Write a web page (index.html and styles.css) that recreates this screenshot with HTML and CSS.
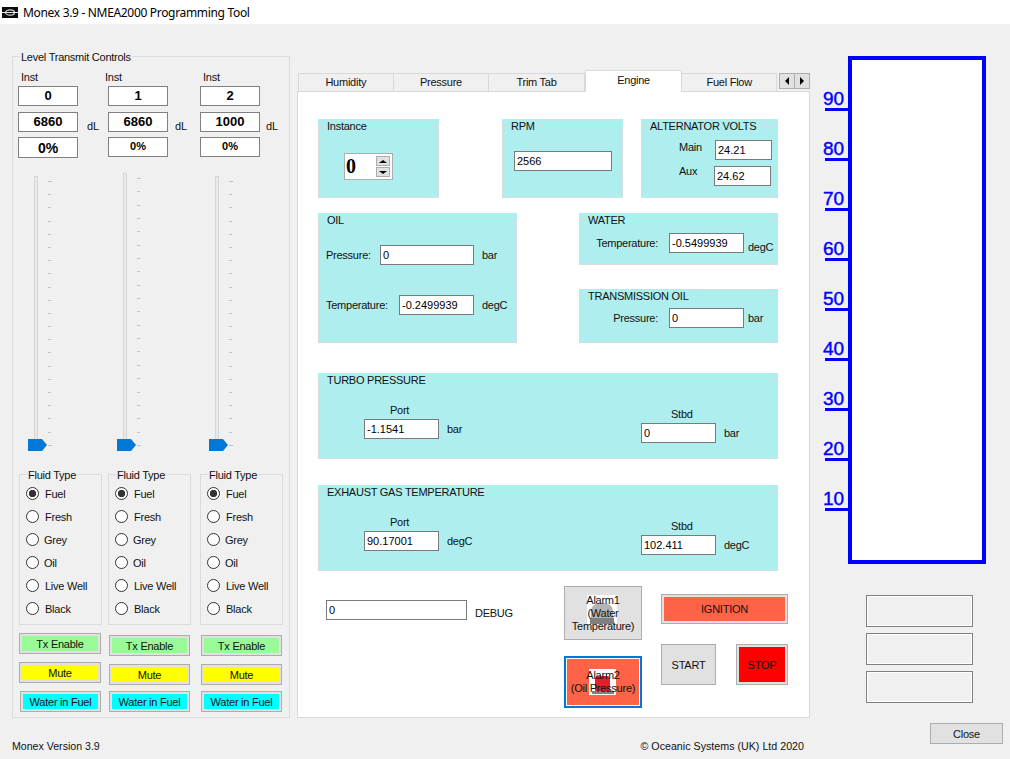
FILE: index.html
```html
<!DOCTYPE html>
<html lang="en">
<head>
<meta charset="utf-8">
<title>Monex 3.9 - NMEA2000 Programming Tool</title>
<link rel="stylesheet" href="styles.css">
</head>
<body>
<header class="titlebar">
  <svg class="logo" width="16" height="11" viewBox="0 0 16 11"><rect width="16" height="11" fill="#0a0a0a"/><ellipse cx="8" cy="5.5" rx="4.5" ry="2.6" fill="none" stroke="#d8d8d8" stroke-width="1.2"/><path d="M0 5.5H16" stroke="#e8e8e8" stroke-width="1"/></svg>
  <span class="titletext">Monex 3.9 - NMEA2000 Programming Tool</span>
</header>
<main class="window">
  <div class="leftcol">
    <section class="group level">
      <div class="frame">
        <div class="legend">Level Transmit Controls</div>
        <div class="channels">
          <div class="channel c1">
            <div class="inst">Inst</div>
            <div class="box b1">0</div>
            <div class="boxrow"><div class="box">6860</div><span class="dl">dL</span></div>
            <div class="box b3 tall">0%</div>
            <div class="slider"><span class="track"></span><span class="ticks"><i></i><i></i><i></i><i></i><i></i><i></i><i></i><i></i><i></i><i></i><i></i><i></i><i></i><i></i><i></i><i></i><i></i><i></i><i></i><i></i><i></i></span><svg class="thumb" width="19" height="12" viewBox="0 0 19 12"><path d="M0 0H14L19 6L14 12H0Z"/></svg></div>
            <section class="group fluid">
              <div class="frame">
                <div class="legend">Fluid Type</div>
                <label class="radio"><input type="radio" name="f1" checked><span>Fuel</span></label>
                <label class="radio"><input type="radio" name="f1"><span>Fresh</span></label>
                <label class="radio"><input type="radio" name="f1"><span class="tight">Grey</span></label>
                <label class="radio"><input type="radio" name="f1"><span class="tight">Oil</span></label>
                <label class="radio"><input type="radio" name="f1"><span>Live Well</span></label>
                <label class="radio"><input type="radio" name="f1"><span>Black</span></label>
              </div>
            </section>
            <button class="btn tx">Tx Enable</button>
            <button class="btn mute">Mute</button>
            <button class="btn wif">Water in Fuel</button>
          </div>
          <div class="channel c2">
            <div class="inst">Inst</div>
            <div class="box b1">1</div>
            <div class="boxrow"><div class="box">6860</div><span class="dl">dL</span></div>
            <div class="box b3 small">0%</div>
            <div class="slider"><span class="track"></span><span class="ticks"><i></i><i></i><i></i><i></i><i></i><i></i><i></i><i></i><i></i><i></i><i></i><i></i><i></i><i></i><i></i><i></i><i></i><i></i><i></i><i></i><i></i></span><svg class="thumb" width="19" height="12" viewBox="0 0 19 12"><path d="M0 0H14L19 6L14 12H0Z"/></svg></div>
            <section class="group fluid">
              <div class="frame">
                <div class="legend">Fluid Type</div>
                <label class="radio"><input type="radio" name="f2" checked><span>Fuel</span></label>
                <label class="radio"><input type="radio" name="f2"><span>Fresh</span></label>
                <label class="radio"><input type="radio" name="f2"><span class="tight">Grey</span></label>
                <label class="radio"><input type="radio" name="f2"><span class="tight">Oil</span></label>
                <label class="radio"><input type="radio" name="f2"><span>Live Well</span></label>
                <label class="radio"><input type="radio" name="f2"><span>Black</span></label>
              </div>
            </section>
            <button class="btn tx">Tx Enable</button>
            <button class="btn mute">Mute</button>
            <button class="btn wif">Water in Fuel</button>
          </div>
          <div class="channel c3">
            <div class="inst">Inst</div>
            <div class="box b1">2</div>
            <div class="boxrow"><div class="box">1000</div><span class="dl">dL</span></div>
            <div class="box b3 small">0%</div>
            <div class="slider"><span class="track"></span><span class="ticks"><i></i><i></i><i></i><i></i><i></i><i></i><i></i><i></i><i></i><i></i><i></i><i></i><i></i><i></i><i></i><i></i><i></i><i></i><i></i><i></i><i></i></span><svg class="thumb" width="19" height="12" viewBox="0 0 19 12"><path d="M0 0H14L19 6L14 12H0Z"/></svg></div>
            <section class="group fluid">
              <div class="frame">
                <div class="legend">Fluid Type</div>
                <label class="radio"><input type="radio" name="f3" checked><span>Fuel</span></label>
                <label class="radio"><input type="radio" name="f3"><span>Fresh</span></label>
                <label class="radio"><input type="radio" name="f3"><span class="tight">Grey</span></label>
                <label class="radio"><input type="radio" name="f3"><span class="tight">Oil</span></label>
                <label class="radio"><input type="radio" name="f3"><span>Live Well</span></label>
                <label class="radio"><input type="radio" name="f3"><span>Black</span></label>
              </div>
            </section>
            <button class="btn tx">Tx Enable</button>
            <button class="btn mute">Mute</button>
            <button class="btn wif">Water in Fuel</button>
          </div>
        </div>
      </div>
    </section>
    <div class="version">Monex Version 3.9</div>
  </div>

  <div class="centercol">
    <nav class="tabs">
      <div class="tab t-hum">Humidity</div>
      <div class="tab t-pre">Pressure</div>
      <div class="tab t-tri">Trim Tab</div>
      <div class="tab t-eng active">Engine</div>
      <div class="tab t-fue">Fuel Flow</div>
      <div class="scroller"><span class="scrollbtn"><i class="arrow-left"></i></span><span class="scrollbtn"><i class="arrow-right"></i></span></div>
    </nav>
    <div class="page">
      <div class="row-a">
        <section class="group panel p-inst">
          <div class="frame">
            <div class="legend">Instance</div>
            <div class="spinner"><span class="spinval">0</span><span class="spinbtns"><span class="spinbtn"><i class="arrow-up"></i></span><span class="spinbtn"><i class="arrow-down"></i></span></span></div>
          </div>
        </section>
        <section class="group panel p-rpm">
          <div class="frame">
            <div class="legend">RPM</div>
            <input class="inp w98 rpm-in" value="2566">
          </div>
        </section>
        <section class="group panel p-alt">
          <div class="frame">
            <div class="legend">ALTERNATOR VOLTS</div>
            <div class="field alt-main"><span class="lbl">Main</span><input class="inp w57" value="24.21"></div>
            <div class="field alt-aux"><span class="lbl">Aux</span><input class="inp w57" value="24.62"></div>
          </div>
        </section>
      </div>
      <div class="row-b">
        <section class="group panel p-oil">
          <div class="frame">
            <div class="legend">OIL</div>
            <div class="field oil-1"><span class="lbl">Pressure:</span><input class="inp w94" value="0"><span class="unit">bar</span></div>
            <div class="field oil-2"><span class="lbl">Temperature:</span><input class="inp w75" value="-0.2499939"><span class="unit">degC</span></div>
          </div>
        </section>
        <div class="stack">
          <section class="group panel p-wat">
            <div class="frame">
              <div class="legend">WATER</div>
              <div class="field sfield"><span class="lbl">Temperature:</span><input class="inp w75" value="-0.5499939"><span class="unit low">degC</span></div>
            </div>
          </section>
          <section class="group panel p-tra">
            <div class="frame">
              <div class="legend">TRANSMISSION OIL</div>
              <div class="field sfield"><span class="lbl">Pressure:</span><input class="inp w75" value="0"><span class="unit">bar</span></div>
            </div>
          </section>
        </div>
      </div>
      <section class="group panel p-wide p-tur">
        <div class="frame">
          <div class="legend">TURBO PRESSURE</div>
          <div class="pair">
            <div class="block port"><div class="cap">Port</div><div class="field"><input class="inp w75" value="-1.1541"><span class="unit">bar</span></div></div>
            <div class="block stbd"><div class="cap">Stbd</div><div class="field"><input class="inp w75" value="0"><span class="unit">bar</span></div></div>
          </div>
        </div>
      </section>
      <section class="group panel p-wide p-exh">
        <div class="frame">
          <div class="legend">EXHAUST GAS TEMPERATURE</div>
          <div class="pair">
            <div class="block port"><div class="cap">Port</div><div class="field"><input class="inp w75" value="90.17001"><span class="unit">degC</span></div></div>
            <div class="block stbd"><div class="cap">Stbd</div><div class="field"><input class="inp w75" value="102.411"><span class="unit">degC</span></div></div>
          </div>
        </div>
      </section>
      <div class="row-e">
        <div class="field debug"><input class="inp w141" value="0"><span class="unit low3">DEBUG</span></div>
        <div class="alarms">
          <button class="alarm a1">
            <svg class="alarm-icon i1" width="30" height="30" viewBox="0 0 30 30"><rect width="30" height="30" fill="#fff"/><path d="M4 23V17C4 11 8 8 15 8S26 11 26 17V23Z" fill="#b4b4b4"/><rect x="3" y="23" width="24" height="6" fill="#808080"/></svg>
            <span class="alarm-text">Alarm1<br>(Water<br>Temperature)</span>
          </button>
          <button class="alarm a2">
            <svg class="alarm-icon i2" width="27" height="26" viewBox="0 0 27 26"><rect width="27" height="26" fill="#fff"/><path d="M6 22V10C6 8 8 7 10 7H18C20 7 21 8 21 10V22Z" fill="#e0202a"/><rect x="3" y="22" width="22" height="3" fill="#808080"/></svg>
            <span class="alarm-text">Alarm2<br>(Oil Pressure)</span>
          </button>
        </div>
        <div class="engine-ctl">
          <button class="btn ign">IGNITION</button>
          <div class="startstop">
            <button class="plain start">START</button>
            <button class="btn stop">STOP</button>
          </div>
        </div>
      </div>
    </div>
    <div class="copyright">© Oceanic Systems (UK) Ltd 2020</div>
  </div>

  <aside class="rightcol">
    <div class="meter">
      <div class="scale">
        <div class="mark">90</div><div class="mark">80</div><div class="mark">70</div><div class="mark">60</div><div class="mark">50</div><div class="mark">40</div><div class="mark">30</div><div class="mark">20</div><div class="mark">10</div>
      </div>
      <div class="gauge"></div>
    </div>
    <div class="readouts">
      <div class="readout"></div>
      <div class="readout"></div>
      <div class="readout"></div>
    </div>
    <button class="plain close">Close</button>
  </aside>
</main>
</body>
</html>
```
FILE: styles.css
```css
* { box-sizing: border-box; }
html, body { margin: 0; padding: 0; }
body {
  width: 1010px;
  height: 759px;
  overflow: hidden;
  background: #f0f0f0;
  color: #111;
  font: 11px/14px "Liberation Sans", Arial, sans-serif;
  letter-spacing: -0.25px;
}
button, input { font: inherit; letter-spacing: inherit; color: inherit; margin: 0; }

/* title bar */
.titlebar { height: 24px; background: #fff; display: flex; align-items: center; padding: 1px 0 0 2px; }
.logo { display: block; }
.titletext { margin-left: 5px; font: 12px/16px "Noto Sans", sans-serif; letter-spacing: -0.32px; color: #000; }

.window { display: flex; align-items: flex-start; }

/* group boxes */
.group { display: flex; flex-direction: column; padding-top: 6px; }
.frame { flex: 1; border: 1px solid #d9dcde; min-height: 0; }
.legend {
  width: fit-content;
  margin: -7px 0 0 7px;
  padding: 0 1px;
  background: #f0f0f0;
  white-space: nowrap;
}

/* left column */
.leftcol { width: 278px; margin: 26px 0 0 12px; }
.level { height: 668px; }
.channels { display: grid; grid-template-columns: 87px 93px 90px; padding-left: 5px; padding-top: 6px; }
.channel { display: flex; flex-direction: column; align-items: flex-start; }
.c1 { --inst: 3px; --box: 0px; --dl: 9px; --track: 16px; --fluid: 1px; --btn: 1px; --wif: 2px; --btnw: 82px; --wifw: 81px; --slide: 18px; --sliderh: 275px; --tx: 8px; --wifgap: 8px; }
.c2 { --inst: 0px; --box: 3px; --dl: 7px; --track: 18px; --fluid: 3px; --btn: 4px; --wif: 4px; --btnw: 81px; --wifw: 81px; --slide: 16px; --sliderh: 278px; --tx: 10px; --wifgap: 6px; }
.c3 { --inst: 5px; --box: 2px; --dl: 6px; --track: 17px; --fluid: 2px; --btn: 3px; --wif: 3px; --btnw: 81px; --wifw: 81px; --slide: 19px; --sliderh: 275px; --tx: 10px; --wifgap: 6px; }
.inst { margin-left: var(--inst); }
.box {
  flex: none;
  width: 60px;
  height: 20px;
  margin-left: var(--box);
  border: 1px solid #808080;
  background: #fff;
  text-align: center;
  font-weight: 700;
  font-size: 13px;
  line-height: 18px;
  letter-spacing: 0;
  color: #000;
}
.b1 { margin-top: 2px; }
.boxrow { display: flex; align-items: center; height: 20px; margin-top: 6px; }
.dl { margin: 7px 0 0 var(--dl); font-size: 11px; letter-spacing: 0; }
.b3 { margin-top: 5px; }
.b3.tall { height: 21px; font-size: 14px; line-height: 20px; }
.b3.small { font-size: 11px; line-height: 17px; }

.slider { position: relative; display: flex; width: 60px; height: var(--sliderh); margin: var(--slide) 0 0 var(--track); gap: 10px; }
.track { width: 4px; height: calc(100% - 6px); border: 1px solid #d6d6d6; background: #e7eae7; }
.ticks { display: flex; flex-direction: column; justify-content: space-between; margin: 5px 0; }
.ticks i { display: block; width: 3px; height: 1px; background: #c4c4c4; }
.ticks i:first-child, .ticks i:last-child { width: 4px; }
.thumb { position: absolute; left: -6px; bottom: 0; fill: #0078d7; }

.fluid { width: 83px; height: 157px; margin: 17px 0 0 var(--fluid); }
.radio { display: flex; align-items: center; height: 23px; padding-left: 6px; }
.radio input {
  appearance: none;
  flex: none;
  width: 13px;
  height: 13px;
  margin: 0 6px 0 0;
  border: 1px solid #333;
  border-radius: 50%;
  background: #fff;
}
.radio input:checked { background: radial-gradient(circle, #333 0, #333 3.4px, #fff 4px); }
.tight { margin-left: -1px; }

.btn {
  display: block;
  height: 21px;
  padding: 0;
  border: 1px solid #adadad;
  box-shadow: inset 0 0 0 2px #e1e1e1;
  text-align: center;
}
.tx, .mute { width: var(--btnw); margin-left: var(--btn); }
.tx { margin-top: var(--tx); background: #98fb98; }
.mute { margin-top: 8px; background: #ffff00; }
.wif { width: var(--wifw); margin: var(--wifgap) 0 0 var(--wif); background: #00ffff; }

.version { margin-top: 21px; letter-spacing: 0; font-size: 10.6px; }

/* centre */
.centercol { width: 513px; margin: 46px 0 0 7px; }
.tabs { position: relative; display: flex; height: 21px; align-items: flex-end; padding-left: 1px; }
.tab {
  height: 18px;
  border: 1px solid #d9d9d9;
  border-bottom: 0;
  border-left-width: 0;
  background: #f0f0f0;
  text-align: center;
  line-height: 16px;
}
.t-hum { width: 96px; border-left-width: 1px; }
.t-pre { width: 96px; }
.t-tri { width: 96px; }
.t-eng { width: 98px; }
.t-fue { width: 95px; }
.tab.active {
  position: relative;
  z-index: 1;
  height: 22px;
  margin-bottom: -1px;
  border-left-width: 1px;
  background: #fff;
  line-height: 19px;
}
.scroller { display: flex; align-self: flex-start; margin: 3px 0 0 2px; }
.scrollbtn {
  display: flex;
  align-items: center;
  justify-content: center;
  width: 16px;
  height: 16px;
  border: 1px solid #adadad;
  background: #e1e1e1;
}
.scrollbtn + .scrollbtn { width: 15px; border-left: 0; }
.arrow-left, .arrow-right, .arrow-up, .arrow-down { display: block; width: 0; height: 0; border-style: solid; border-color: transparent; }
.arrow-left { border-width: 4px 4px 4px 0; border-right-color: #000; }
.arrow-right { border-width: 4px 0 4px 4px; border-left-color: #000; }
.arrow-up { border-width: 0 4px 3px; border-bottom-color: #000; }
.arrow-down { border-width: 3px 4px 0; border-top-color: #000; }

.page {
  height: 627px;
  padding: 27px 0 0 20px;
  border: 1px solid #d9d9d9;
  background: #fff;
}
.panel { background: #afeeee; }
.panel .legend { background: #afeeee; }

.row-a { display: flex; height: 79px; }
.p-inst { width: 121px; }
.p-rpm { width: 121px; margin-left: 63px; }
.p-alt { width: 137px; margin-left: 18px; }

.inp {
  display: block;
  flex: none;
  height: 20px;
  padding: 0 0 0 2px;
  border: 1px solid #7a7a7a;
  border-radius: 0;
  background: #fff;
  outline: 0;
  letter-spacing: 0;
  color: #000;
}
.w57 { width: 57px; }
.w75 { width: 75px; }
.w94 { width: 94px; }
.w98 { width: 98px; }
.w141 { width: 141px; }

.spinner {
  display: flex;
  justify-content: space-between;
  width: 49px;
  height: 27px;
  margin: 20px 0 0 25px;
  padding: 2px 2px 2px 1px;
  border: 1px solid #adadad;
  background: #fff;
}
.spinval { font: 700 20px/20px "Liberation Serif", serif; letter-spacing: 0; color: #000; }
.spinbtns { display: flex; flex-direction: column; gap: 1px; }
.spinbtn {
  display: flex;
  align-items: center;
  justify-content: center;
  width: 14px;
  height: 10px;
  border: 1px solid #adadad;
  background: #e1e1e1;
}
.rpm-in { margin: 18px 0 0 11px; }

.field { display: flex; align-items: center; height: 20px; }
.lbl { flex: none; }
.unit { margin-left: 8px; }
.low { margin-top: 8px; margin-left: 4px; }
.low3 { margin-top: 6px; }
.alt-main { margin: 7px 0 0 37px; }
.alt-main .lbl { width: 36px; margin-bottom: 6px; }
.alt-aux { margin: 6px 0 0 37px; }
.alt-aux .lbl { width: 35px; margin-bottom: 10px; }

.row-b { display: flex; justify-content: space-between; width: 460px; height: 130px; margin-top: 15px; }
.p-oil { width: 199px; }
.oil-1 { margin: 18px 0 0 7px; }
.oil-1 .lbl { width: 54px; }
.oil-2 { margin: 30px 0 0 7px; }
.oil-2 .lbl { width: 73px; }
.stack { width: 199px; }
.p-wat { height: 52px; }
.p-tra { height: 54px; margin-top: 24px; }
.sfield { margin: 6px 0 0 16px; }
.p-tra .sfield { margin-top: 5px; }
.p-tra .unit { margin-left: 4px; }
.sfield .lbl { width: 73px; padding-right: 11px; text-align: right; }

.p-wide { width: 460px; height: 86px; }
.p-tur { margin-top: 30px; }
.p-exh { margin-top: 26px; }
.pair { display: grid; grid-template-columns: 277px auto; margin-left: 45px; }
.cap { line-height: 14px; }
.port { margin-top: 16px; }
.stbd { margin-top: 20px; }
.port .cap { padding-left: 26px; margin-bottom: 2px; }
.stbd .cap { padding-left: 30px; margin-bottom: 2px; }

.row-e { display: flex; align-items: flex-start; }
.debug { width: 238px; margin: 29px 0 0 8px; }
.alarms { display: flex; flex-direction: column; width: 78px; margin-top: 15px; gap: 16px; }
.alarm {
  position: relative;
  display: flex;
  align-items: center;
  justify-content: center;
  width: 78px;
  padding: 0;
  line-height: 13px;
  text-align: center;
}
.a1 { height: 54px; border: 1px solid #adadad; background: #e1e1e1; }
.a2 { height: 52px; border: 2px solid #0078d7; box-shadow: inset 0 0 0 1px #fff; background: #ff6347; }
.alarm-icon { position: absolute; }
.i1 { left: 22px; top: 8px; }
.i2 { left: 23px; top: 11px; }
.alarm-text { position: relative; white-space: nowrap; }
.engine-ctl { width: 127px; margin: 23px 0 0 19px; }
.ign { width: 127px; height: 30px; background: #ff6347; }
.startstop { display: flex; justify-content: space-between; height: 41px; margin-top: 20px; }
.plain { padding: 0; border: 1px solid #adadad; background: #e1e1e1; }
.start { width: 55px; height: 41px; }
.stop { width: 52px; height: 41px; background: #ff0000; }

.copyright { margin-top: 21px; padding-right: 6px; text-align: right; letter-spacing: 0; font-size: 10.7px; }

/* right */
.rightcol { width: 187px; margin: 32px 0 0 13px; }
.meter { display: flex; height: 508px; }
.scale { width: 25px; padding-top: 5px; }
.mark {
  width: 23px;
  height: 50px;
  margin-left: 2px;
  border-bottom: 3px solid #0000ff;
  color: #0000ff;
  font: 400 19px/16px "Liberation Sans", sans-serif;
  -webkit-text-stroke: 0.4px #0000ff;
  letter-spacing: 0;
  padding-top: 30px;
  text-indent: -2px;
}
.gauge { width: 138px; height: 508px; border: 4px solid #0000ff; background: #fff; }
.readouts { display: flex; flex-direction: column; gap: 6px; margin: 31px 0 0 43px; }
.readout { width: 107px; height: 32px; border: 1px solid #808080; box-shadow: inset 0 0 0 1px #fff; }
.close { display: block; width: 73px; height: 21px; margin: 20px 0 0 107px; }
```
